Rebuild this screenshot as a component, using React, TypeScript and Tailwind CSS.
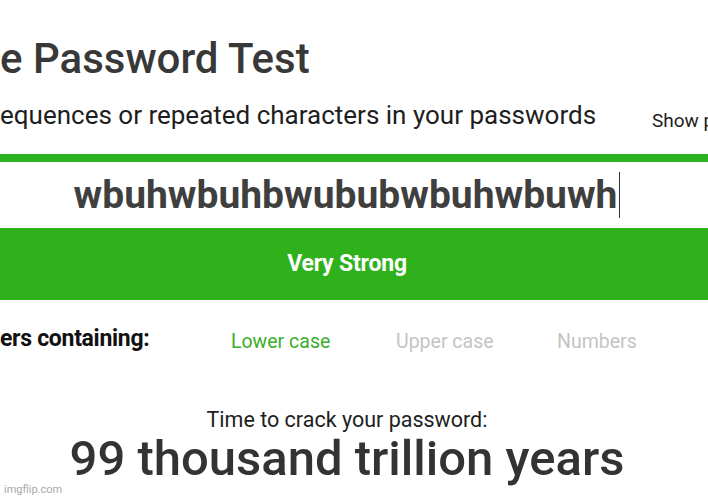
export default function App() {
  const font = { fontFamily: 'Roboto, "Liberation Sans", sans-serif' };
  return (
    <div
      className="relative h-[500px] w-[708px] overflow-hidden bg-white"
      style={font}
    >
      {/* Title */}
      <h1 className="mt-[35px] whitespace-nowrap text-[42px] leading-[48px] font-medium text-[#383838]">
        e Password Test
      </h1>

      {/* Subtitle + show toggle */}
      <div className="mt-[17px] flex items-start whitespace-nowrap">
        <p className="w-[652px] shrink-0 text-[26px] leading-[30px] text-[#1e1e1e]">
          equences or repeated characters in your passwords
        </p>
        <span className="mt-[11px] shrink-0 text-[19px] leading-[19px] text-[#1e1e1e]">
          Show password
        </span>
      </div>

      {/* Input */}
      <div className="mt-[24px] h-[8px] w-full bg-[#2eb11e]" />
      <div className="flex h-[66px] w-[694px] items-center justify-center">
        <span className="text-[39px] font-bold leading-[44px] text-[#3f3f3f]">
          wbuhwbuhbwububwbuhwbuwh
        </span>
        <span className="ml-[2px] h-[46px] w-px bg-[#333]" />
      </div>

      {/* Strength band */}
      <div className="flex h-[72px] w-full items-center bg-[#2eb11b]">
        <div className="w-[694px] text-center text-[23px] font-bold tracking-[-0.2px] text-white">
          Very Strong
        </div>
      </div>

      {/* Character types */}
      <div className="mt-[22px] flex items-center whitespace-nowrap">
        <span className="w-[231px] shrink-0 text-[23px] font-bold tracking-[-0.3px] text-[#111]">
          ers containing:
        </span>
        <span className="mt-[4px] w-[165px] shrink-0 text-[19.5px] text-[#3aae2a]">
          Lower case
        </span>
        <span className="mt-[4px] w-[161px] shrink-0 text-[19.5px] text-[#c4c4c4]">
          Upper case
        </span>
        <span className="mt-[4px] shrink-0 text-[19.5px] text-[#c4c4c4]">
          Numbers
        </span>
      </div>

      {/* Time to crack */}
      <div className="mt-[50px] w-[694px] text-center">
        <div className="text-[21.5px] leading-[26px] text-[#1e1e1e]">
          Time to crack your password:
        </div>
        <div className="whitespace-nowrap text-[49px] leading-[52px] font-medium text-[#333]">
          99 thousand trillion years
        </div>
      </div>

      <div className="absolute bottom-[2px] left-[4px] text-[11px] text-[#a8a8a8]">
        imgflip.com
      </div>
    </div>
  );
}
